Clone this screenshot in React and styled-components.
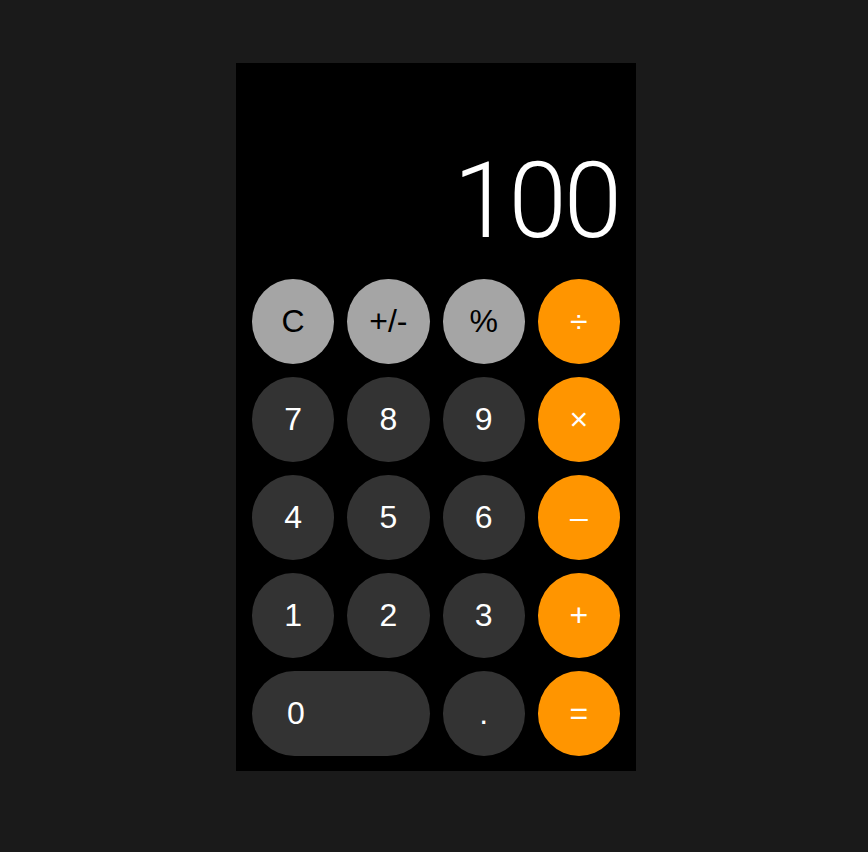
import React from "react";
import styled, { createGlobalStyle } from "styled-components";

const GlobalStyle = createGlobalStyle`
  html, body {
    margin: 0;
    padding: 0;
    background: #1a1a1a;
  }
  * { box-sizing: border-box; }
`;

const Page = styled.div`
  display: flex;
  justify-content: center;
  padding: 63px 0 81px 4px;
  min-height: 852px;
`;

const Calculator = styled.div`
  width: 400px;
  height: 708px;
  background: #000;
  display: flex;
  flex-direction: column;
  justify-content: flex-end;
  padding: 0 16px 15px;
`;

const Display = styled.div`
  display: flex;
  justify-content: flex-end;
  align-items: flex-end;
  color: #fff;
  font-family: Roboto, "Liberation Sans", sans-serif;
  font-weight: 300;
  font-size: 105px;
  line-height: 1;
  margin-bottom: 25px;
  letter-spacing: -3px;
  padding-right: 1px;
`;

const Keypad = styled.div`
  display: grid;
  grid-template-columns: repeat(4, 1fr);
  grid-auto-rows: 85px;
  gap: 13px;
`;

const palette = {
  light: { bg: "#a5a5a5", fg: "#000", weight: 400 },
  dark: { bg: "#333333", fg: "#fff", weight: 400 },
  orange: { bg: "#ff9500", fg: "#fff", weight: 400 },
};

const Key = styled.button`
  border: none;
  border-radius: ${(p) => (p.$wide ? "43px" : "50%")};
  background: ${(p) => palette[p.$kind].bg};
  color: ${(p) => palette[p.$kind].fg};
  font-family: "Liberation Sans", Arial, sans-serif;
  font-size: 32px;
  font-weight: ${(p) => palette[p.$kind].weight};
  display: flex;
  align-items: center;
  justify-content: ${(p) => (p.$wide ? "flex-start" : "center")};
  padding: 0 0 0 ${(p) => (p.$wide ? "35px" : "0")};
  grid-column: ${(p) => (p.$wide ? "span 2" : "auto")};
  cursor: pointer;
`;

const keys = [
  ["C", "light"],
  ["+/-", "light"],
  ["%", "light"],
  ["÷", "orange"],
  ["7", "dark"],
  ["8", "dark"],
  ["9", "dark"],
  ["×", "orange"],
  ["4", "dark"],
  ["5", "dark"],
  ["6", "dark"],
  ["–", "orange"],
  ["1", "dark"],
  ["2", "dark"],
  ["3", "dark"],
  ["+", "orange"],
  ["0", "dark", true],
  [".", "dark"],
  ["=", "orange"],
];

export default function App() {
  return (
    <>
      <GlobalStyle />
      <Page>
        <Calculator>
          <Display>100</Display>
          <Keypad>
            {keys.map(([label, kind, wide]) => (
              <Key key={label} $kind={kind} $wide={wide}>
                {label}
              </Key>
            ))}
          </Keypad>
        </Calculator>
      </Page>
    </>
  );
}
